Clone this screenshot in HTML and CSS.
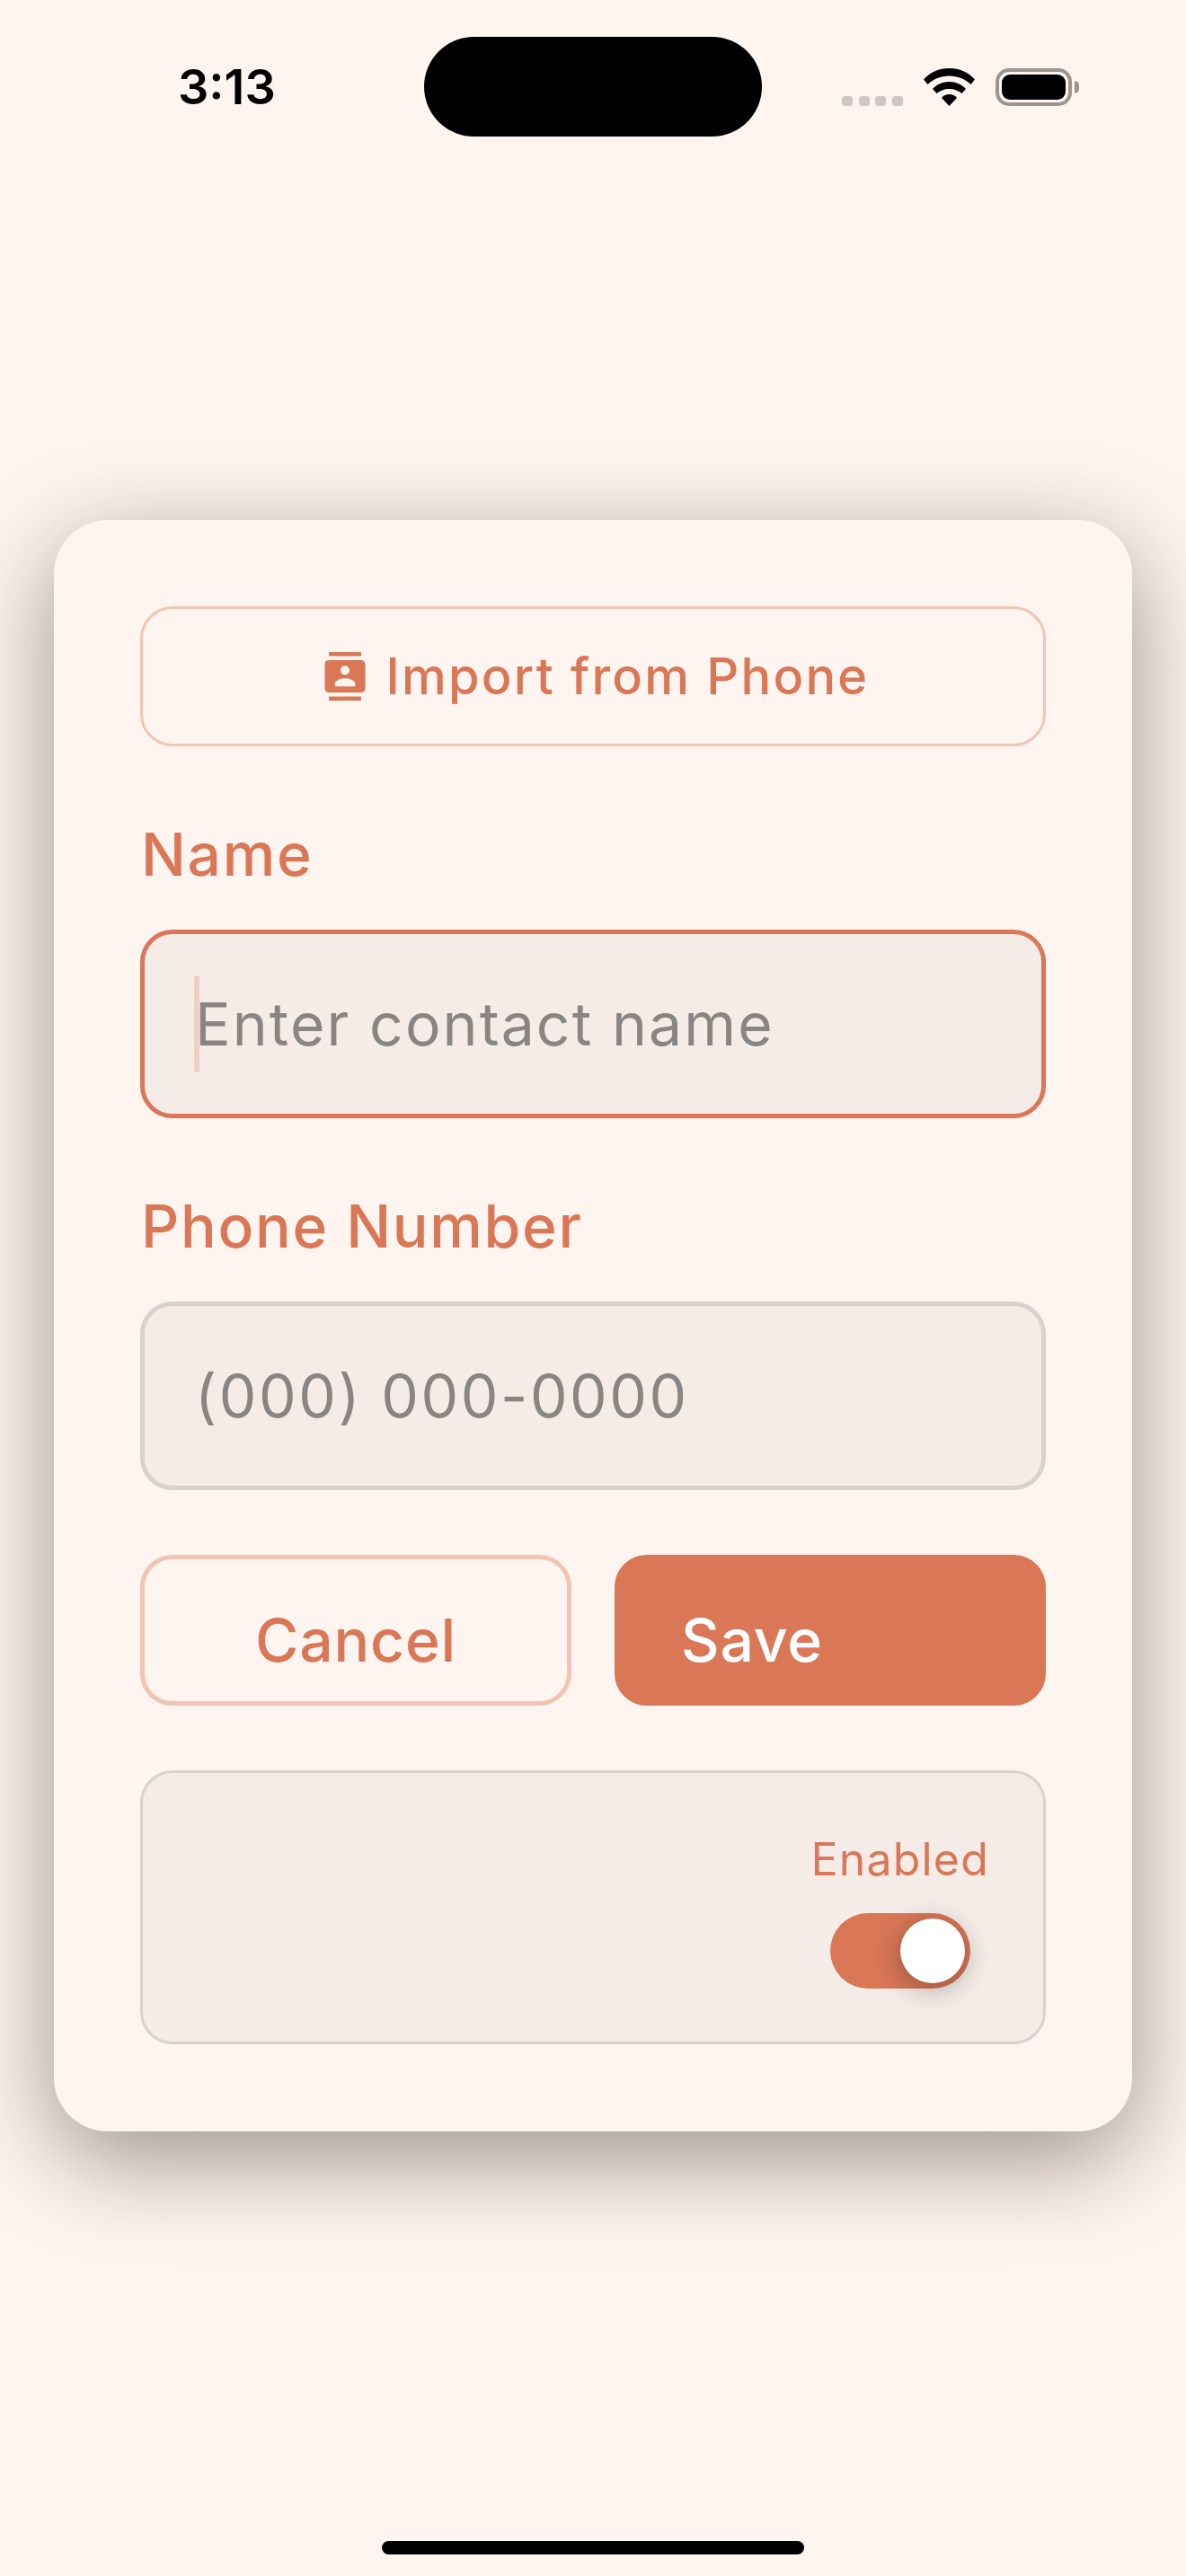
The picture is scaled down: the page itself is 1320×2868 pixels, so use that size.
FILE: index.html
```html
<!DOCTYPE html>
<html lang="en">
<head>
<meta charset="utf-8">
<title>Add Contact</title>
<link rel="stylesheet" href="styles.css">
</head>
<body>
<div class="screen">
  <header class="status-bar">
    <span class="clock">3:13</span>
    <div class="island"></div>
    <div class="status-icons">
      <div class="signal"><i></i><i></i><i></i><i></i></div>
      <svg class="wifi" viewBox="0 0 57 42" width="57" height="42">
        <path d="M0 12.5C7 4.5 17 0 28.5 0S50 4.5 57 12.5L52.5 18C46 12 38 8.5 28.5 8.5S11 12 4.5 18Z"/>
        <path d="M10 23C14.5 18 21 15 28.5 15S42.5 18 47 23L42.5 28C39 25 34 23 28.5 23S18 25 14.5 28Z"/>
        <path d="M20 33C22 30.5 25 29 28.5 29S35 30.5 37 33L28.5 42Z"/>
      </svg>
      <div class="battery"><div class="battery-shell"><div class="battery-level"></div></div><div class="battery-cap"></div></div>
    </div>
  </header>

  <main class="card">
    <button class="import-btn" type="button">
      <svg class="import-icon" viewBox="0 0 24 24" width="54" height="54">
        <path d="M20 0H4v2h16V0zM4 24h16v-2H4v2zM20 4H4c-1.1 0-2 .9-2 2v12c0 1.1.9 2 2 2h16c1.1 0 2-.9 2-2V6c0-1.1-.9-2-2-2zm-8 2.75c1.24 0 2.25 1.01 2.25 2.25s-1.01 2.25-2.25 2.25S9.75 10.24 9.75 9 10.76 6.75 12 6.75zM17 17H7v-1.5c0-1.67 3.33-2.5 5-2.5s5 .83 5 2.5V17z"/>
      </svg>
      <span>Import from Phone</span>
    </button>

    <label class="field-label field-label-first">Name</label>
    <div class="input input-focused"><span class="caret"></span><span class="placeholder">Enter contact name</span></div>

    <label class="field-label">Phone Number</label>
    <div class="input"><span class="placeholder placeholder-digits">(000) 000-0000</span></div>

    <div class="actions">
      <button class="action action-cancel" type="button"><span class="action-text">Cancel</span></button>
      <button class="action action-save" type="button"><span class="action-text">Save</span></button>
    </div>

    <section class="status-panel">
      <div class="status-control">
        <span class="status-label">Enabled</span>
        <div class="toggle"><div class="toggle-knob"></div></div>
      </div>
    </section>
  </main>

  <div class="home-indicator"></div>
</div>
</body>
</html>
```
FILE: styles.css
```css
* { box-sizing: border-box; }

html, body { margin: 0; padding: 0; }

body {
  background: #fff5f0;
  font-family: "Inter", "Liberation Sans", sans-serif;
}

.screen {
  display: flex;
  flex-direction: column;
  height: 2868px;
  overflow: hidden;
}

/* Status bar */
.status-bar {
  display: flex;
  align-items: center;
  height: 111px;
  margin-top: 41px;
  flex: none;
}

.clock {
  flex: none;
  width: 472px;
  padding-left: 198px;
  font-size: 54px;
  font-weight: 600;
  line-height: 111px;
  color: #000;
}

.island {
  width: 376px;
  height: 111px;
  border-radius: 56px;
  background: #000;
  flex: none;
}

.status-icons {
  display: flex;
  align-items: flex-end;
  margin-left: 89px;
  height: 42px;
}

.signal { display: flex; gap: 6.5px; margin-right: 23px; }
.signal i {
  display: block;
  width: 12px;
  height: 11px;
  border-radius: 3.5px;
  background: #cfc7c4;
}

.wifi { display: block; margin-right: 23px; fill: #000; }

.battery { display: flex; align-items: center; height: 42px; }
.battery-shell {
  width: 85px;
  height: 42px;
  padding: 3px;
  border: 4px solid #9c9490;
  border-radius: 15px;
}
.battery-level {
  height: 100%;
  border-radius: 9px;
  background: #000;
}
.battery-cap {
  width: 5px;
  height: 14px;
  margin-left: 3px;
  border-radius: 0 5px 5px 0;
  background: #9c9490;
}

/* Card */
.card {
  flex: none;
  width: 1200px;
  height: 1794px;
  margin: 427px 0 0 60px;
  padding: 96px;
  border-radius: 60px;
  background: #fff5f0;
  box-shadow: 0 30px 110px rgba(15, 5, 0, 0.42);
}

.import-btn {
  display: flex;
  align-items: center;
  justify-content: center;
  gap: 19px;
  width: 100%;
  height: 156px;
  padding: 0 0 0 4px;
  border: 3px solid #f2c4b3;
  border-radius: 36px;
  background: transparent;
  color: #d97757;
  font: 450 56px/1 "Inter", "Liberation Sans", sans-serif;
  letter-spacing: 2.2px;
}
.import-icon { display: block; fill: #d97757; flex: none; }

.field-label {
  display: block;
  margin: 80px 0 44px;
  padding-left: 1px;
  font-size: 66px;
  font-weight: 450;
  line-height: 80px;
  letter-spacing: 1.7px;
  color: #d97757;
}

.input {
  display: flex;
  align-items: center;
  height: 210px;
  padding-left: 55px;
  border: 5px solid #ddd0cc;
  border-radius: 36px;
  background: #f5ece7;
}
.input-focused { border-color: #d97757; }

.caret {
  flex: none;
  width: 6px;
  height: 108px;
  margin-right: -6px;
  border-radius: 3px;
  background: #f0cfc3;
}

.placeholder {
  padding-left: 1px;
  font-size: 66px;
  font-weight: 400;
  line-height: 80px;
  letter-spacing: 2.1px;
  color: #8a8583;
}
.placeholder-digits { letter-spacing: 2.6px; }

.actions {
  display: flex;
  gap: 48px;
  margin-top: 72px;
}

.action {
  flex: none;
  display: flex;
  align-items: flex-start;
  width: 480px;
  height: 168px;
  padding: 50px 0 0;
  border: 5px solid #d97757;
  border-radius: 36px;
  background: #d97757;
  color: #fff;
  font: 450 66px/80px "Inter", "Liberation Sans", sans-serif;
  letter-spacing: 0.8px;
}
.action-cancel {
  justify-content: center;
  border-color: #f2c4b3;
  background: transparent;
  color: #d97757;
}
.action-save { padding-left: 69px; }

/* The label sits low in the button and is cut off at its baseline */
.action-text {
  display: block;
  height: 65px;
  overflow: hidden;
}

.status-panel {
  display: flex;
  justify-content: flex-end;
  height: 305px;
  margin-top: 72px;
  padding: 66px 60px 0 0;
  border: 3px solid #ddd0cc;
  border-radius: 36px;
  background: #f5ece7;
}

.status-control {
  display: flex;
  flex-direction: column;
  align-items: center;
  gap: 30px;
}

.status-label {
  font-size: 50px;
  line-height: 60px;
  letter-spacing: 1.2px;
  color: #d97757;
}

.toggle {
  display: flex;
  justify-content: flex-end;
  width: 156px;
  height: 84px;
  padding: 6px;
  border-radius: 42px;
  background: #d97757;
}

.toggle-knob {
  width: 72px;
  height: 72px;
  border-radius: 50%;
  background: #fff;
  box-shadow: 0 6px 30px rgba(0, 0, 0, 0.32);
}

.home-indicator {
  flex: none;
  width: 470px;
  height: 15px;
  margin: 456px auto 0;
  border-radius: 8px;
  background: #000;
}
```
